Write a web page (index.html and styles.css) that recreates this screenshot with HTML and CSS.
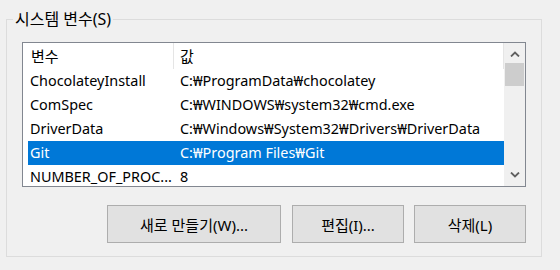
FILE: index.html
```html
<!DOCTYPE html>
<html lang="ko">
<head>
    <meta charset="UTF-8">
    <title>시스템 변수</title>
    <link rel="stylesheet" href="styles.css">
</head>
<body>
    <div class="group">
        <span class="legend">시스템 변수(S)</span>

        <div class="list">
            <div class="list-body">
                <div class="list-header">
                    <div class="col-name">변수</div>
                    <div class="col-value">값</div>
                </div>
                <div class="row">
                    <div class="col-name">ChocolateyInstall</div>
                    <div class="col-value">C:₩ProgramData₩chocolatey</div>
                </div>
                <div class="row">
                    <div class="col-name">ComSpec</div>
                    <div class="col-value">C:₩WINDOWS₩system32₩cmd.exe</div>
                </div>
                <div class="row">
                    <div class="col-name">DriverData</div>
                    <div class="col-value">C:₩Windows₩System32₩Drivers₩DriverData</div>
                </div>
                <div class="row selected">
                    <div class="col-name">Git</div>
                    <div class="col-value">C:₩Program Files₩Git</div>
                </div>
                <div class="row">
                    <div class="col-name">NUMBER_OF_PROC...</div>
                    <div class="col-value">8</div>
                </div>
            </div>
            <!-- vertical scrollbar -->
            <div class="scrollbar">
                <svg class="arrow" width="10" height="6" viewBox="0 0 10 6">
                    <path d="M1 5.5 L5 1.5 L9 5.5" fill="none" stroke="#606060" stroke-width="1.8"/>
                </svg>
                <div class="thumb"></div>
                <div class="track"></div>
                <svg class="arrow" width="10" height="6" viewBox="0 0 10 6">
                    <path d="M1 0.5 L5 4.5 L9 0.5" fill="none" stroke="#606060" stroke-width="1.8"/>
                </svg>
            </div>
        </div>

        <div class="buttons">
            <button class="btn btn-wide">새로 만들기(W)...</button>
            <button class="btn">편집(I)...</button>
            <button class="btn">삭제(L)</button>
        </div>
    </div>
</body>
</html>
```

FILE: styles.css
```css
body {
    margin: 0;
    padding: 19px 0 0 6px;
    background: #f0f0f0;
    font-family: 'Noto Sans', 'Noto Sans CJK KR', sans-serif;
    font-size: 15px;
    color: #000;
}

.group {
    position: relative;
    width: 536px;
    height: 238px;
    border: 1px solid #dcdcdc;
    padding: 22px 0 0 15px;
    box-sizing: border-box;
}

.legend {
    position: absolute;
    top: -12px;
    left: 6px;
    padding: 0 2px;
    background: #f0f0f0;
    font-size: 16px;
    line-height: 22px;
}

.list {
    display: flex;
    width: 504px;
    height: 145px;
    border: 1px solid #828790;
    box-sizing: border-box;
    background: #fff;
    font-size: 14.4px;
    overflow: hidden;
}

.list-body {
    flex: 1;
    padding-left: 5px;
    overflow: hidden;
}

.list-header {
    display: flex;
    height: 26px;
    line-height: 26px;
    font-size: 15px;
}

.list-header .col-name {
    border-right: 1px solid #e5e5e5;
    padding-left: 3px;
}

.list-header .col-value {
    border-right: 1px solid #e5e5e5;
    padding-left: 6px;
}

.row {
    display: flex;
    height: 24px;
    line-height: 24px;
    white-space: nowrap;
}

.row.selected {
    background: #0078d7;
    color: #fff;
}

.col-name {
    width: 146px;
    flex-shrink: 0;
    padding-left: 2px;
    box-sizing: border-box;
    overflow: hidden;
}

.col-value {
    flex: 1;
    padding-left: 6px;
}

.scrollbar {
    width: 21px;
    display: flex;
    flex-direction: column;
    align-items: center;
    background: #f0f0f0;
    padding: 8px 0 8px;
}

.arrow {
    flex-shrink: 0;
}

.thumb {
    width: 19px;
    height: 23px;
    margin-top: 6px;
    background: #cdcdcd;
}

.track {
    flex: 1;
}

.buttons {
    display: flex;
    justify-content: flex-end;
    gap: 10px;
    width: 504px;
    margin-top: 18px;
}

.btn {
    width: 112px;
    height: 38px;
    background: #e1e1e1;
    border: 1px solid #adadad;
    font-family: inherit;
    font-size: 15px;
    color: #000;
    padding: 0;
}

.btn-wide {
    width: 174px;
    margin-right: 1px;
}
```
